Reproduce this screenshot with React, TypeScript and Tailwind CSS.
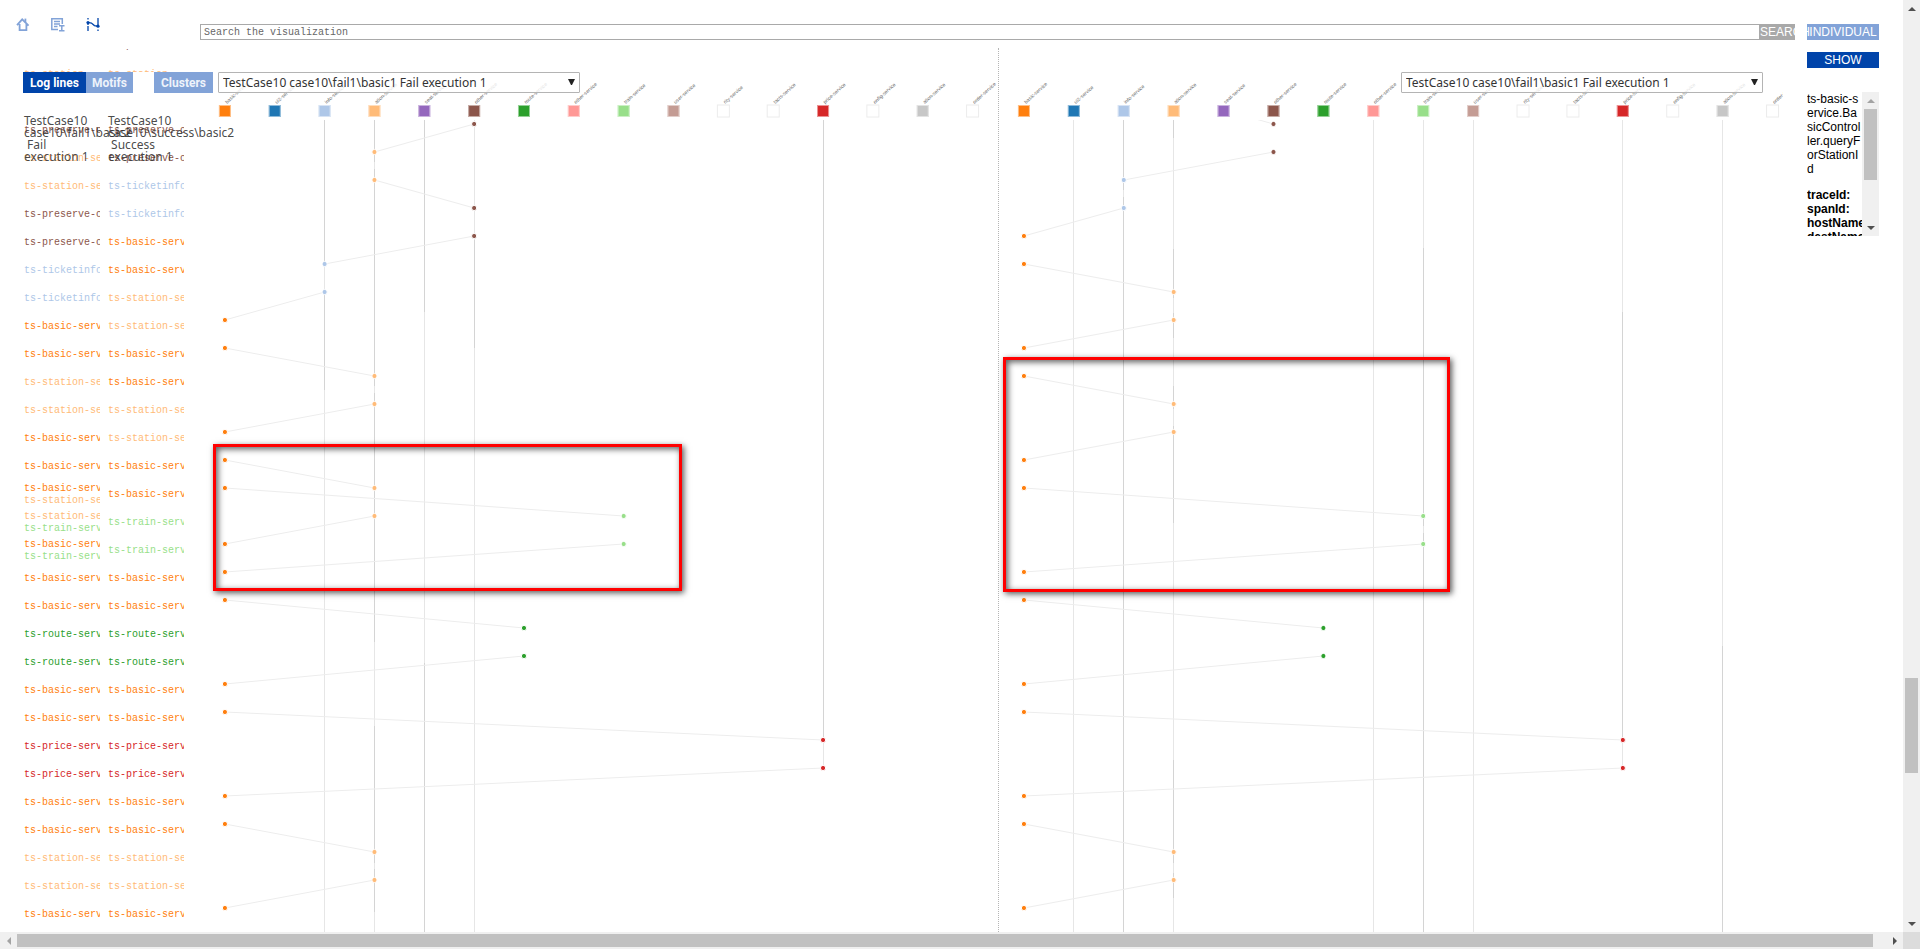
import React from "react";

type Service = { label: string; color: string; log?: string };
type Point = [col: number, row: number];
type Segment = [col: number, from: number, to: number, dark: boolean];

const ROW = 28;
const FIRST_ROW = 4;
const ROW_COUNT = 29;

const services: Service[] = [
  { label: "basic-service", color: "#ff7f0e", log: "ts-basic-service" },
  { label: "ui2-service", color: "#1f77b4" },
  { label: "info-service", color: "#aec7e8", log: "ts-ticketinfo-service" },
  { label: "ation-service", color: "#ffbb78", log: "ts-station-service" },
  { label: "seat-service", color: "#9467bd" },
  { label: "other-service", color: "#8c564b", log: "ts-preserve-other-service" },
  { label: "route-service", color: "#2ca02c", log: "ts-route-service" },
  { label: "other-service", color: "#ff9896" },
  { label: "train-service", color: "#98df8a", log: "ts-train-service" },
  { label: "user-service", color: "#c49c94" },
  { label: "rity-service", color: "" },
  { label: "tacts-service", color: "" },
  { label: "price-service", color: "#d62728", log: "ts-price-service" },
  { label: "onfig-service", color: "" },
  { label: "ation-service", color: "#c7c7c7" },
  { label: "order-service", color: "" },
];

const failRows: number[][] = [
  [5], [3], [3], [5], [5], [2], [2], [0], [0], [3], [3], [0], [0], [0, 3], [3, 8],
  [0, 8], [0], [0], [6], [6], [0], [0], [12], [12], [0], [0], [3], [3], [0],
];

const successRows: number[][] = [
  [5], [5], [2], [2], [0], [0], [3], [3], [0], [0], [3], [3], [0], [0], [8],
  [8], [0], [0], [6], [6], [0], [0], [12], [12], [0], [0], [3], [3], [0],
];

const sharedEdges: [Point, Point][] = [
  [[0, 17], [6, 18]],
  [[6, 19], [0, 20]],
  [[0, 21], [12, 22]],
  [[12, 23], [0, 24]],
  [[0, 25], [3, 26]],
  [[3, 27], [0, 28]],
];

const failEdges: [Point, Point][] = [
  [[5, 0], [3, 1]],
  [[3, 2], [5, 3]],
  [[5, 4], [2, 5]],
  [[2, 6], [0, 7]],
  [[0, 8], [3, 9]],
  [[3, 10], [0, 11]],
  [[0, 12], [3, 13]],
  [[0, 13], [8, 14]],
  [[3, 14], [0, 15]],
  [[8, 15], [0, 16]],
  ...sharedEdges,
];

const successEdges: [Point, Point][] = [
  [[3, -1], [5, 0]],
  [[5, 1], [2, 2]],
  [[2, 3], [0, 4]],
  [[0, 5], [3, 6]],
  [[3, 7], [0, 8]],
  [[0, 9], [3, 10]],
  [[3, 11], [0, 12]],
  [[0, 13], [8, 14]],
  [[8, 15], [0, 16]],
  ...sharedEdges,
];

const END = 2000;

const failLines: Segment[] = [
  [2, 0, 144, true], [2, 144, 172, false], [2, 172, 270, true], [2, 270, END, false],
  [3, 0, 42, true], [3, 42, 49, false], [3, 49, 266, true], [3, 266, 273, false],
  [3, 273, 522, true], [3, 522, 606, false], [3, 606, 743, true], [3, 743, 749, false],
  [3, 749, 792, true], [3, 792, END, false],
  [4, 0, 192, true], [4, 192, 543, false], [4, 543, END, true],
  [5, 0, 120, false], [5, 120, 228, true], [5, 228, END, false],
  [12, 0, 620, true], [12, 620, 648, false],
];

const successLines: Segment[] = [
  [1, 0, END, false],
  [2, 0, 70, true], [2, 70, 77, false], [2, 77, END, true],
  [3, 0, 18, true], [3, 18, 129, false], [3, 129, 178, true], [3, 178, 193, false],
  [3, 193, 218, true], [3, 218, 266, false], [3, 266, 289, true], [3, 289, 306, false],
  [3, 306, 403, true], [3, 403, 640, false], [3, 640, 743, true], [3, 743, 753, false],
  [3, 753, 778, true], [3, 778, END, false],
  [7, 0, END, false],
  [8, 0, 128, false], [8, 128, 406, true], [8, 406, 413, false], [8, 413, END, true],
  [9, 0, END, false],
  [12, 0, 192, false], [12, 192, 620, true], [12, 620, 648, false],
  [14, 0, 526, false], [14, 526, END, true],
];

const px = (col: number) => `${((col + 0.5) / services.length) * 100}%`;
const py = (row: number) => FIRST_ROW + row * ROW;

function ServiceHeader() {
  return (
    <svg className="block h-[27px] w-full shrink-0 overflow-visible" role="img" aria-label="Services">
      {services.map((s, i) => (
        <svg key={i} x={px(i)} y="18" className="overflow-visible">
          {s.color ? (
            <>
              <rect x="-6" y="-6" width="12" height="12" fill={s.color} />
              <rect x="-5.5" y="-5.5" width="11" height="11" fill="none" stroke="#fff" strokeOpacity="0.5" />
            </>
          ) : (
            <rect x="-6" y="-6" width="12" height="12" fill="#fff" stroke="#ececec" />
          )}
          <text x="2" y="-7" transform="rotate(-42 2 -7)" fontSize="5" fill="#666" className="font-['Liberation_Sans',sans-serif]">
            {s.label}
          </text>
        </svg>
      ))}
    </svg>
  );
}

function Timeline({ rows, edges, lines, label }: { rows: number[][]; edges: [Point, Point][]; lines: Segment[]; label: string }) {
  return (
    <svg className="block min-h-0 w-full flex-1 overflow-hidden" role="img" aria-label={label}>
      {lines.map(([c, a, b, dark], i) => (
        <line key={i} x1={px(c)} x2={px(c)} y1={a} y2={b} stroke={dark ? "#d4d4d4" : "#e6e6e6"} shapeRendering="crispEdges" />
      ))}
      {edges.map(([p, q], i) => (
        <line key={i} x1={px(p[0])} y1={py(p[1])} x2={px(q[0])} y2={py(q[1])} stroke="#ededed" />
      ))}
      {rows.map((cols, r) =>
        cols.map((c) => (
          <circle key={`${r}-${c}`} cx={px(c)} cy={py(r)} r="2.6" fill={services[c].color} stroke="#fff" strokeWidth="1" />
        ))
      )}
    </svg>
  );
}

function ExecutionSelect({ id, className }: { id: string; className: string }) {
  return (
    <div className={`relative z-10 h-[21px] ${className}`}>
      <label htmlFor={id} className="sr-only">Execution</label>
      <select id={id} className="block h-full w-full appearance-none rounded-[1px] border border-[#b4b4b4] bg-white/80 pr-6 pl-1 text-[12px] leading-[16px] text-[#333]">
        <option>TestCase10 case10\fail1\basic1 Fail execution 1</option>
      </select>
      <svg className="pointer-events-none absolute top-[7px] right-[5px] h-[6px] w-[7px]" viewBox="0 0 7 6">
        <path d="M0 0H7L4 6H3Z" fill="#222" />
      </svg>
    </div>
  );
}

function LogCell({ cols }: { cols: number[] }) {
  return (
    <td className="h-[28px] p-0 align-middle">
      {cols.map((c) => (
        <div key={c} className="w-[76px] overflow-hidden leading-[12px] whitespace-nowrap" style={{ color: services[c].color }}>
          {services[c].log}
        </div>
      ))}
    </td>
  );
}

function Arrow({ dir, muted = false }: { dir: "up" | "down" | "left" | "right"; muted?: boolean }) {
  const paths = {
    up: "M4 0L8 4H0Z",
    down: "M0 0H8L4 4Z",
    left: "M4 0V8L0 4Z",
    right: "M0 0L4 4L0 8Z",
  };
  const tall = dir === "left" || dir === "right";
  return (
    <svg className={tall ? "h-[8px] w-[4px]" : "h-[4px] w-[8px]"} viewBox={tall ? "0 0 4 8" : "0 0 8 4"}>
      <path d={paths[dir]} fill={muted ? "#a3a3a3" : "#505050"} />
    </svg>
  );
}

function Sidebar() {
  return (
    <aside className="relative flex w-[200px] shrink-0 flex-col">
      <nav className="flex h-[49px] shrink-0 items-start gap-[21px] pt-[18px] pl-[16px]">
        <a href="#home" aria-label="Home">
          <svg className="h-[14px] w-[14px]" viewBox="0 0 14 14" fill="none" stroke="#82a3d8" strokeWidth="1.8">
            <path d="M1 7.2L6.2 1.4L12.6 7.6M3.6 6V12.2H10.4V6" />
            <path d="M9.4 0.6V4.4" />
          </svg>
        </a>
        <a href="#logs" aria-label="Logs">
          <svg className="h-[14px] w-[14px]" viewBox="0 0 14 14" fill="none" stroke="#82a3d8" strokeWidth="1.5">
            <path d="M11.3 6V0.8H0.8V11.5H7" />
            <path d="M3 3.5H9M3 6H9M3 8.5H6.5" />
            <path d="M8 7.8H13.5M10.8 7.8V12.8M8 12.8H13.5" />
          </svg>
        </a>
        <a href="#compare" aria-label="Compare">
          <svg className="h-[14px] w-[14px]" viewBox="0 0 14 14" fill="none" stroke="#0044aa" strokeWidth="1.3">
            <path d="M2 0V1.6M2 4V7M2 8V13M12 0V7.4M12 11.4V13" />
            <path d="M3 4.6L5.4 5L8.4 7.6L11 8" />
            <circle cx="2" cy="4.6" r="1.6" fill="#0044aa" stroke="none" />
            <circle cx="12" cy="8.2" r="1.6" fill="#0044aa" stroke="none" />
          </svg>
        </a>
      </nav>
      <div className="h-[2px] shrink-0 overflow-hidden pl-[108px] font-['Liberation_Mono',monospace] text-[10px] leading-[12px] text-[#8c564b]">
        <div className="-mt-[9px] w-[76px] overflow-hidden whitespace-nowrap">ts-preserve-other-service</div>
      </div>
      <div className="mt-[17px] flex h-[4px] shrink-0 gap-[8px] overflow-hidden pl-[24px] font-['Liberation_Mono',monospace] text-[10px] leading-[14px] text-[#ffbb78]">
        <span className="h-[14px] w-[76px] overflow-hidden">ts-station-se</span>
        <span className="h-[14px] w-[76px] overflow-hidden">ts-station-se</span>
      </div>
      <div className="z-10 flex h-[21px] shrink-0 pl-[23px] font-['Roboto',sans-serif] text-[12px] font-bold whitespace-nowrap text-white">
        <button className="w-[63px] shrink-0 bg-[#0044aa]">Log lines</button>
        <button className="w-[47px] shrink-0 bg-[#82a3d8] text-[#eef3fb]">Motifs</button>
        <button className="ml-[21px] w-[59px] shrink-0 bg-[#82a3d8] text-[#eef3fb]">Clusters</button>
      </div>
      <div className="mt-[24px] min-h-0 flex-1 overflow-hidden">
        <table className="ml-[24px] w-[168px] table-fixed border-collapse font-['Liberation_Mono',monospace] text-[10px]">
          <tbody>
            {Array.from({ length: ROW_COUNT }, (_, r) => (
              <tr key={r}>
                <LogCell cols={failRows[r]} />
                <LogCell cols={successRows[r]} />
              </tr>
            ))}
          </tbody>
        </table>
      </div>
      <div className="pointer-events-none absolute top-[115px] left-[24px] z-10 flex text-[12px] leading-[12px] whitespace-pre text-[#333]/90">
        <div className="w-[84px]">{"TestCase10\ncase10\\fail1\\basic2\n Fail\nexecution 1"}</div>
        <div className="w-[84px]">{"TestCase10\ncase10\\success\\basic2\n Success\nexecution 1"}</div>
      </div>
    </aside>
  );
}

const highlight =
  "pointer-events-none absolute border-3 border-[#ff0000] shadow-[2px_2px_6px_rgba(0,0,0,0.65),inset_2px_2px_6px_rgba(0,0,0,0.65)]";

function Workspace() {
  return (
    <section className="flex min-w-0 flex-1 flex-col">
      <form className="flex h-[48px] shrink-0 items-start pt-[24px] pr-[2px] font-['Liberation_Sans',sans-serif]">
        <label htmlFor="search" className="sr-only">Search the visualization</label>
        <input
          id="search"
          type="text"
          placeholder="Search the visualization"
          className="h-[16px] min-w-0 flex-1 border border-[#a9a9a9] pl-[3px] font-['Liberation_Mono',monospace] text-[10px] placeholder:text-[#666]"
        />
        <button type="button" className="relative z-10 h-[16px] w-[35px] bg-[#a9a9a9] text-left text-[12px] leading-[16px] text-white">
          SEARCH
        </button>
      </form>
      <div className="mr-[14px] flex min-h-0 flex-1 overflow-hidden">
        <div className="-mr-[14px] grid min-h-0 flex-1 grid-cols-2">
          <div className="relative flex min-h-0 flex-col border-r border-dotted border-[#b5b5b5] pt-[24px]">
            <ExecutionSelect id="left-execution" className="ml-[18px] w-[362px]" />
            <ServiceHeader />
            <Timeline rows={failRows} edges={failEdges} lines={failLines} label="Failed execution" />
            <div className={`${highlight} top-[396px] left-[13px] h-[147px] w-[469px]`} />
          </div>
          <div className="relative flex min-h-0 flex-col pt-[24px]">
            <ExecutionSelect id="right-execution" className="mr-[34px] w-[362px] self-end" />
            <ServiceHeader />
            <Timeline rows={successRows} edges={successEdges} lines={successLines} label="Successful execution" />
            <div className={`${highlight} top-[309px] left-[4px] h-[235px] w-[447px]`} />
          </div>
        </div>
      </div>
    </section>
  );
}

function Details() {
  return (
    <aside className="flex w-[106px] shrink-0 flex-col pt-[24px] pr-[24px] pl-[10px] font-['Liberation_Sans',sans-serif] text-[12px] leading-[16px]">
      <button className="h-[16px] bg-[#82a3d8] text-white">INDIVIDUAL</button>
      <button className="mt-[12px] h-[16px] bg-[#0044aa] text-white">SHOW</button>
      <div className="mt-[24px] flex h-[144px] overflow-hidden leading-[14px] text-black">
        <div className="w-[55px] overflow-hidden break-all">
          <p>ts-basic-service.BasicController.queryForStationId</p>
          <dl className="mt-[12px] font-bold whitespace-nowrap">
            <dt>traceId:</dt>
            <dt>spanId:</dt>
            <dt>hostName:</dt>
            <dt>destName:</dt>
          </dl>
        </div>
        <div className="flex w-[17px] shrink-0 flex-col items-center bg-[#f0f0f0]">
          <div className="flex h-[17px] items-center"><Arrow dir="up" muted /></div>
          <div className="h-[71px] w-[13px] bg-[#c1c1c1]" />
          <div className="mt-auto flex h-[17px] items-center"><Arrow dir="down" /></div>
        </div>
      </div>
    </aside>
  );
}

export default function App() {
  return (
    <div className="flex h-screen flex-col overflow-hidden bg-white font-['Noto_Sans',sans-serif]">
      <div className="flex min-h-0 flex-1">
        <main className="flex min-w-0 flex-1">
          <Sidebar />
          <Workspace />
          <Details />
        </main>
        <div className="flex w-[17px] shrink-0 flex-col items-center bg-[#f0f0f0]">
          <div className="flex h-[17px] items-center"><Arrow dir="up" /></div>
          <div className="flex-[661]" />
          <div className="h-[95px] w-[13px] bg-[#c1c1c1]" />
          <div className="flex-[142]" />
          <div className="flex h-[17px] items-center"><Arrow dir="down" /></div>
        </div>
      </div>
      <div className="flex h-[17px] shrink-0 items-center bg-[#f0f0f0]">
        <div className="flex w-[17px] justify-center"><Arrow dir="left" muted /></div>
        <div className="h-[13px] flex-1 bg-[#c1c1c1]" />
        <div className="w-[13px]" />
        <div className="flex w-[17px] justify-center"><Arrow dir="right" /></div>
        <div className="h-full w-[17px] bg-[#dcdcdc]" />
      </div>
    </div>
  );
}
